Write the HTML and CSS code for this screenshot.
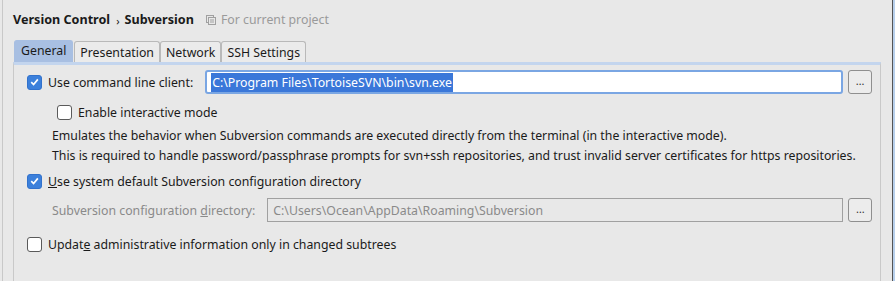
FILE: index.html
```html
<!DOCTYPE html>
<html>
<head>
<meta charset="utf-8">
<link rel="stylesheet" href="styles.css">
</head>
<body>
<div class="window">
  <div class="header">
    <span class="crumb">Version Control</span><span class="sep">›</span><span class="crumb">Subversion</span>
    <span class="scope">
      <svg class="scope-icon" width="10" height="10" viewBox="0 0 10 10"><rect x="0.5" y="0.5" width="7" height="7" fill="none" stroke="#a0a0a0"/><rect x="2.5" y="2.5" width="7" height="7" fill="#e8e8e8" stroke="#a0a0a0"/><line x1="4" y1="5" x2="8" y2="5" stroke="#a0a0a0"/><line x1="4" y1="7" x2="8" y2="7" stroke="#a0a0a0"/></svg>
      For current project
    </span>
  </div>
  <div class="tabs">
    <div class="tab active">General</div>
    <div class="tab">Presentation</div>
    <div class="tab">Network</div>
    <div class="tab">SSH Settings</div>
  </div>
  <div class="panel">
    <div class="row row-client">
      <span class="cb checked"><svg viewBox="0 0 14 14" width="14" height="14"><path d="M3.5 7.2 L6 9.8 L10.6 4.2" fill="none" stroke="#fff" stroke-width="1.8"/></svg></span>
      <span class="label">Use command line client:</span>
      <div class="field focus"><span class="sel">C:\Program Files\TortoiseSVN\bin\svn.exe</span></div>
      <div class="browse">…</div>
    </div>
    <div class="row row-interactive">
      <span class="cb"></span>
      <span class="label">Enable interactive mode</span>
    </div>
    <div class="desc">
      <div>Emulates the behavior when Subversion commands are executed directly from the terminal (in the interactive mode).</div>
      <div>This is required to handle password/passphrase prompts for svn+ssh repositories, and trust invalid server certificates for https repositories.</div>
    </div>
    <div class="row row-default">
      <span class="cb checked"><svg viewBox="0 0 14 14" width="14" height="14"><path d="M3.5 7.2 L6 9.8 L10.6 4.2" fill="none" stroke="#fff" stroke-width="1.8"/></svg></span>
      <span class="label"><u>U</u>se system default Subversion configuration directory</span>
    </div>
    <div class="row row-dir">
      <span class="label disabled">Subversion configuration <u>d</u>irectory:</span>
      <div class="field disabled-field">C:\Users\Ocean\AppData\Roaming\Subversion</div>
      <div class="browse">…</div>
    </div>
    <div class="row row-update">
      <span class="cb"></span>
      <span class="label">Updat<u>e</u> administrative information only in changed subtrees</span>
    </div>
  </div>
</div>
</body>
</html>
```
FILE: styles.css
```css
* { box-sizing: border-box; }
html, body { margin: 0; padding: 0; }
body {
  background: #e8e8e8;
  font-family: "Noto Sans", "Open Sans", sans-serif;
  font-size: 12.3px;
  color: #1a1a1a;
  width: 895px;
  height: 281px;
  overflow: hidden;
}
.window {
  margin-left: 2px;
  width: 891px;
  height: 281px;
  border-left: 1px solid #c8c8c8;
  border-right: 1px solid #555;
  box-shadow: 2px 0 0 #b8d0ec;
  padding-left: 10px;
  display: flex;
  flex-direction: column;
}
.header {
  height: 40px;
  display: flex;
  align-items: center;
  padding-bottom: 2px;
}
.crumb { font-weight: bold; font-size: 12.6px; }
.sep { margin: 0 5px 0 6px; font-size: 11px; position: relative; top: 1px; }
.scope {
  color: #9a9a9a;
  margin-left: 12px;
  display: flex;
  align-items: center;
  gap: 5px;
}
.scope-icon { position: relative; top: 1px; }
.tabs {
  display: flex;
  height: 22px;
  padding-left: 1px;
  align-items: flex-end;
}
.tab {
  height: 21px;
  padding: 0 5px;
  border: 1px solid #b9b9b9;
  border-bottom: none;
  border-radius: 3px 3px 0 0;
  background: #ebebeb;
  display: flex;
  align-items: center;
  margin-right: 0;
}
.tab.active {
  height: 22px;
  background: #a8bfe2;
  border-color: #a8bfe2;
  padding: 0 6px 2px;
  margin-right: 1px;
}
.panel {
  flex: 1;
  width: 868px;
  border: 1px solid #c9c9c9;
  border-top: 3px solid #c3d5ee;
  border-bottom: none;
  padding: 5px 0 0 13px;
}
.row {
  display: flex;
  align-items: center;
  white-space: nowrap;
}
.cb {
  width: 15px;
  height: 15px;
  border: 1px solid #5a5a5a;
  border-radius: 3px;
  background: #fff;
  flex: none;
  display: flex;
  align-items: center;
  justify-content: center;
}
.cb.checked {
  background: #3c80db;
  border-color: #3272cc;
}
.cb svg { display: block; }
.label { margin-left: 6px; white-space: nowrap; }
.label.disabled { color: #8a8a8a; margin-left: 0; }
.row-client { height: 24px; }
.row-client .label { margin-right: 12px; }
.field {
  height: 24px;
  border: 1px solid #999;
  background: #fff;
  display: flex;
  align-items: center;
  padding-left: 5px;
  white-space: nowrap;
  flex: none;
}
.field.focus {
  width: 638px;
  border: 2px solid #7aa6e3;
  border-radius: 3px;
  padding-left: 4px;
}
.sel {
  background: #3a77d9;
  color: #fff;
  padding: 1px 1px;
}
.browse {
  width: 24px;
  height: 24px;
  margin-left: 5px;
  border: 1px solid #8f8f8f;
  border-radius: 3px;
  background: #ececec;
  display: flex;
  align-items: center;
  justify-content: center;
  font-size: 11px;
  padding-bottom: 3px;
  color: #333;
  flex: none;
}
.row-interactive { margin-top: 10px; padding-left: 30px; height: 16px; }
.desc {
  margin-top: 6px;
  padding-left: 25px;
  line-height: 20px;
  white-space: nowrap;
}
.row-default { margin-top: 7px; height: 16px; }
.row-dir { margin-top: 9px; padding-left: 25px; height: 24px; }
.row-dir .label { margin-right: 12px; }
.disabled-field {
  width: 576px;
  background: #e8e8e8;
  color: #8a8a8a;
  border-color: #a0a0a0;
}
.row-update { margin-top: 14px; height: 16px; }
```
